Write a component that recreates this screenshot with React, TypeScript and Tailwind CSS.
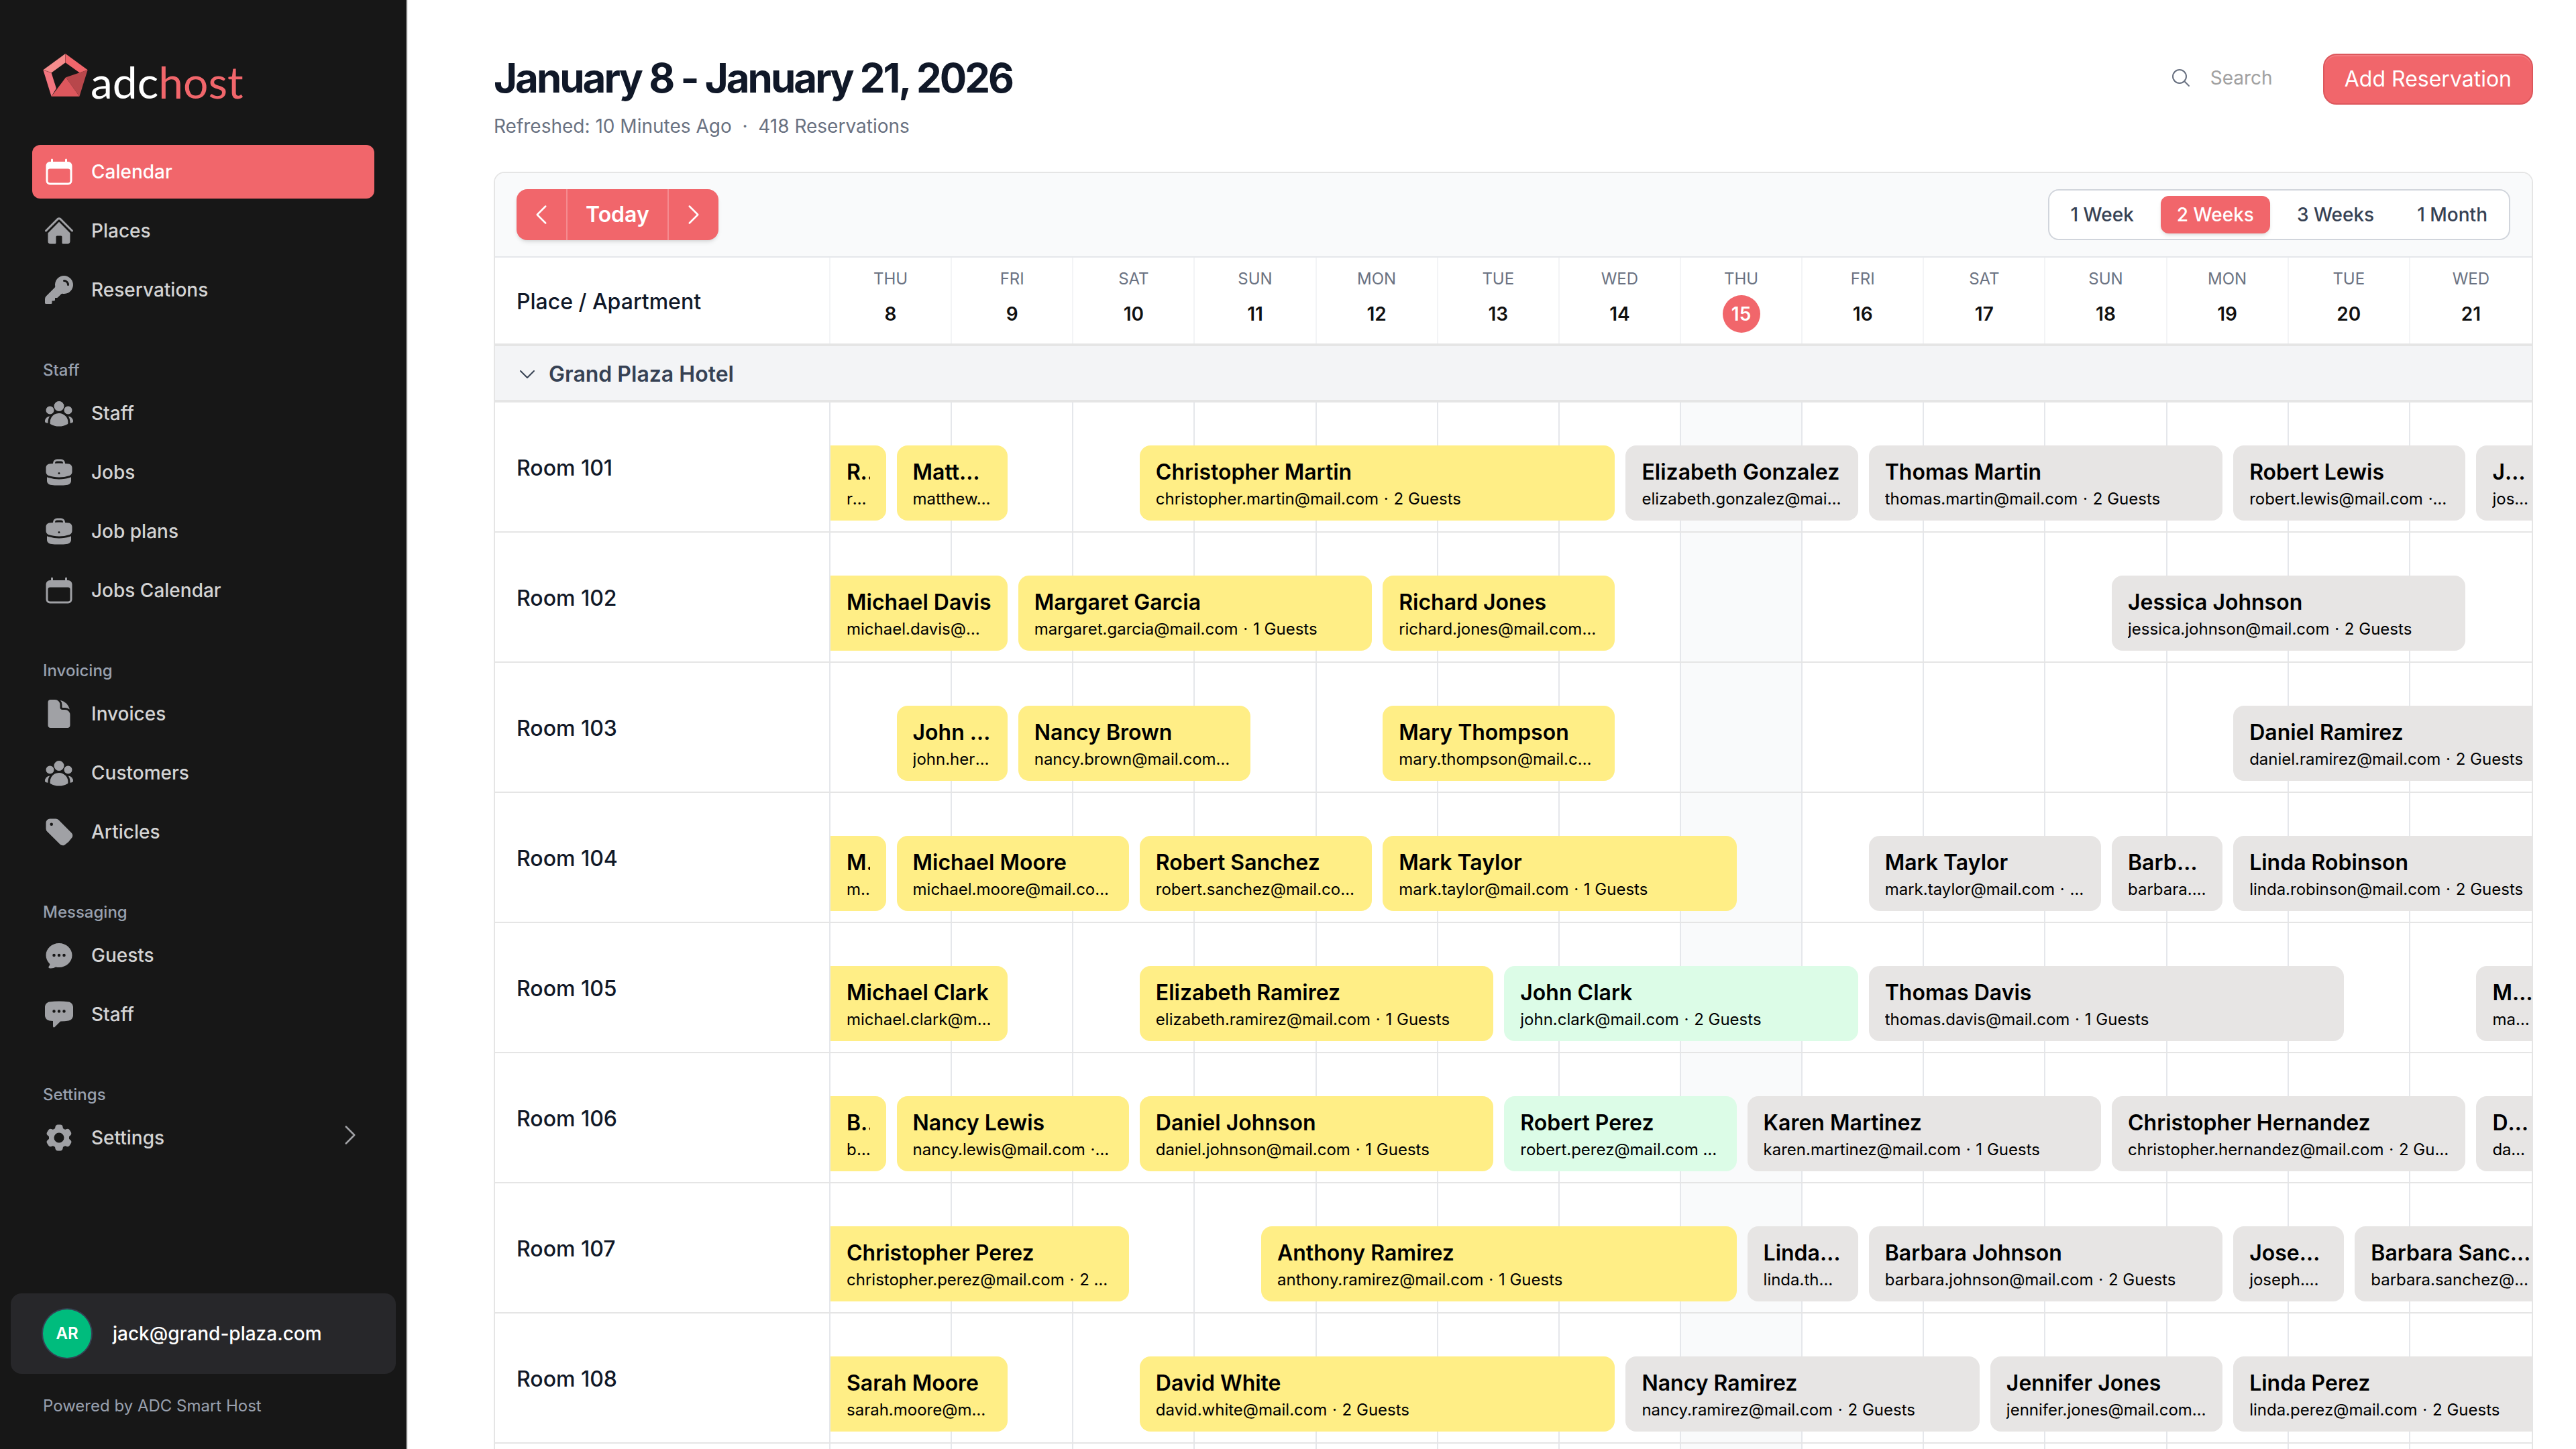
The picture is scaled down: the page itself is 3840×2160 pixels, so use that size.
import type { ReactNode } from "react";
import type { IconType } from "react-icons";
import {
  HiBriefcase,
  HiCalendar,
  HiChatBubbleLeftEllipsis,
  HiChatBubbleOvalLeftEllipsis,
  HiCog6Tooth,
  HiDocument,
  HiHome,
  HiKey,
  HiOutlineChevronDown,
  HiOutlineChevronLeft,
  HiOutlineChevronRight,
  HiOutlineMagnifyingGlass,
  HiTag,
  HiUserGroup,
} from "react-icons/hi2";

type NavEntry = { label: string; icon: IconType; active?: boolean; expandable?: boolean };
type NavGroup = { heading?: string; items: NavEntry[] };

const NAV: NavGroup[] = [
  {
    items: [
      { label: "Calendar", icon: HiCalendar, active: true },
      { label: "Places", icon: HiHome },
      { label: "Reservations", icon: HiKey },
    ],
  },
  {
    heading: "Staff",
    items: [
      { label: "Staff", icon: HiUserGroup },
      { label: "Jobs", icon: HiBriefcase },
      { label: "Job plans", icon: HiBriefcase },
      { label: "Jobs Calendar", icon: HiCalendar },
    ],
  },
  {
    heading: "Invoicing",
    items: [
      { label: "Invoices", icon: HiDocument },
      { label: "Customers", icon: HiUserGroup },
      { label: "Articles", icon: HiTag },
    ],
  },
  {
    heading: "Messaging",
    items: [
      { label: "Guests", icon: HiChatBubbleOvalLeftEllipsis },
      { label: "Staff", icon: HiChatBubbleLeftEllipsis },
    ],
  },
  {
    heading: "Settings",
    items: [{ label: "Settings", icon: HiCog6Tooth, expandable: true }],
  },
];

const WEEKDAYS = ["THU", "FRI", "SAT", "SUN", "MON", "TUE", "WED"];
const DAYS = Array.from({ length: 14 }, (_, i) => ({
  weekday: WEEKDAYS[i % 7],
  date: 8 + i,
  today: 8 + i === 15,
}));

type Tone = "past" | "current" | "upcoming";

// from / to are counted in half days from the start of the visible range.
type Booking = { name: string; guests: number; from: number; to: number; tone: Tone };

const TONES: Record<Tone, string> = {
  past: "bg-[#ffee86]",
  current: "bg-[#dcfce7]",
  upcoming: "bg-[#e7e5e4]",
};

const b = (name: string, guests: number, from: number, to: number, tone: Tone): Booking => ({
  name,
  guests,
  from,
  to,
  tone,
});

const ROOMS: { name: string; bookings: Booking[] }[] = [
  {
    name: "Room 101",
    bookings: [
      b("Robert Miller", 2, 0, 1, "past"),
      b("Matthew Lewis", 2, 1, 3, "past"),
      b("Christopher Martin", 2, 5, 13, "past"),
      b("Elizabeth Gonzalez", 2, 13, 17, "upcoming"),
      b("Thomas Martin", 2, 17, 23, "upcoming"),
      b("Robert Lewis", 2, 23, 27, "upcoming"),
      b("Joseph Clark", 2, 27, 28, "upcoming"),
    ],
  },
  {
    name: "Room 102",
    bookings: [
      b("Michael Davis", 2, 0, 3, "past"),
      b("Margaret Garcia", 1, 3, 9, "past"),
      b("Richard Jones", 2, 9, 13, "past"),
      b("Jessica Johnson", 2, 21, 27, "upcoming"),
    ],
  },
  {
    name: "Room 103",
    bookings: [
      b("John Hernandez", 2, 1, 3, "past"),
      b("Nancy Brown", 2, 3, 7, "past"),
      b("Mary Thompson", 2, 9, 13, "past"),
      b("Daniel Ramirez", 2, 23, 28, "upcoming"),
    ],
  },
  {
    name: "Room 104",
    bookings: [
      b("Mary Lopez", 2, 0, 1, "past"),
      b("Michael Moore", 2, 1, 5, "past"),
      b("Robert Sanchez", 2, 5, 9, "past"),
      b("Mark Taylor", 1, 9, 15, "past"),
      b("Mark Taylor", 2, 17, 21, "upcoming"),
      b("Barbara White", 2, 21, 23, "upcoming"),
      b("Linda Robinson", 2, 23, 28, "upcoming"),
    ],
  },
  {
    name: "Room 105",
    bookings: [
      b("Michael Clark", 2, 0, 3, "past"),
      b("Elizabeth Ramirez", 1, 5, 11, "past"),
      b("John Clark", 2, 11, 17, "current"),
      b("Thomas Davis", 1, 17, 25, "upcoming"),
      b("Mark Harris", 2, 27, 28, "upcoming"),
    ],
  },
  {
    name: "Room 106",
    bookings: [
      b("Barbara Lee", 2, 0, 1, "past"),
      b("Nancy Lewis", 2, 1, 5, "past"),
      b("Daniel Johnson", 1, 5, 11, "past"),
      b("Robert Perez", 2, 11, 15, "current"),
      b("Karen Martinez", 1, 15, 21, "upcoming"),
      b("Christopher Hernandez", 2, 21, 27, "upcoming"),
      b("David Garcia", 2, 27, 28, "upcoming"),
    ],
  },
  {
    name: "Room 107",
    bookings: [
      b("Christopher Perez", 2, 0, 5, "past"),
      b("Anthony Ramirez", 1, 7, 15, "past"),
      b("Linda Thompson", 2, 15, 17, "upcoming"),
      b("Barbara Johnson", 2, 17, 23, "upcoming"),
      b("Joseph Garcia", 2, 23, 25, "upcoming"),
      b("Barbara Sanchez", 2, 25, 28, "upcoming"),
    ],
  },
  {
    name: "Room 108",
    bookings: [
      b("Sarah Moore", 2, 0, 3, "past"),
      b("David White", 2, 5, 13, "past"),
      b("Nancy Ramirez", 2, 13, 19, "upcoming"),
      b("Jennifer Jones", 2, 19, 23, "upcoming"),
      b("Linda Perez", 2, 23, 28, "upcoming"),
    ],
  },
];

const RANGES = ["1 Week", "2 Weeks", "3 Weeks", "1 Month"];

function Logo() {
  return (
    <a href="#" aria-label="adchost" className="flex h-16 items-end gap-1 px-4">
      <svg viewBox="72 60 202 193" className="h-16 w-[67px] shrink-0" aria-hidden="true">
        <polygon points="173,60 173,100 110,146 73,133" fill="#f58c8c" />
        <polygon points="173,60 273,133 237,146 173,100" fill="#f1666b" />
        <polygon points="73,133 110,146 132,216 110,252" fill="#f3757f" />
        <polygon points="273,133 236,252 175,166" fill="#b8474b" />
        <polygon points="175,166 236,252 110,252" fill="#dd575d" />
        <polyline points="173,60 173,100" stroke="#8f3a3d" strokeWidth="1.5" fill="none" />
        <polyline points="73,133 110,146" stroke="#8f3a3d" strokeWidth="1.5" fill="none" />
      </svg>
      <span className="font-['Lato',sans-serif] text-[66px] leading-[44px] text-white">
        adc<span className="text-[#f1666b]">host</span>
      </span>
    </a>
  );
}

function NavItem({ item }: { item: NavEntry }) {
  const Icon = item.icon;
  return (
    <a
      href="#"
      aria-current={item.active ? "page" : undefined}
      className={
        item.active
          ? "flex h-20 items-center gap-6 rounded-xl bg-[#f1666b] px-4 text-[28px] font-medium text-white"
          : "flex h-20 items-center gap-6 rounded-xl px-4 text-[28px] font-medium text-[#d4d4d4]"
      }
    >
      <Icon className={item.active ? "size-12 shrink-0 text-white" : "size-12 shrink-0 text-[#a0a1a5]"} />
      <span>{item.label}</span>
      {item.expandable && (
        <HiOutlineChevronRight className="mt-4 ml-auto size-10 shrink-0 self-start text-[#a0a1a5]" />
      )}
    </a>
  );
}

function Sidebar() {
  return (
    <aside className="flex w-[608px] shrink-0 flex-col border-r-2 border-[#e5e5e5] bg-[#171717]">
      <div className="px-12 pt-20">
        <Logo />
      </div>
      <nav className="mt-[72px] flex flex-col gap-16 px-12">
        {NAV.map((group, i) => (
          <div key={i} className="flex flex-col gap-2">
            {group.heading && (
              <h2 className="px-4 text-[24px] leading-8 font-medium text-[#99a1af]">{group.heading}</h2>
            )}
            {group.items.map((item) => (
              <NavItem key={item.label} item={item} />
            ))}
          </div>
        ))}
      </nav>
      <div className="mt-auto px-4 pb-12">
        <button type="button" className="flex h-[120px] w-full items-center gap-8 rounded-2xl bg-[#27272a] px-12 text-left">
          <span className="flex size-[72px] items-center justify-center rounded-full bg-[#00bc7d] text-[24px] font-semibold text-white ring-2 ring-[#364153]">
            AR
          </span>
          <span className="text-[28px] font-medium text-white">jack@grand-plaza.com</span>
        </button>
        <p className="mt-8 px-12 text-[24px] leading-8 text-[#99a1af]">Powered by ADC Smart Host</p>
      </div>
    </aside>
  );
}

function PageHeader() {
  return (
    <header className="flex items-start justify-between">
      <div>
        <h1 className="text-[60px] leading-[72px] font-bold tracking-tighter text-[#101828]">
          January 8 - January 21, 2026
        </h1>
        <p className="mt-4 text-[28px] leading-10 whitespace-pre text-[#6a7282]">
          Refreshed: 10 Minutes Ago{"  ·  "}418 Reservations
        </p>
      </div>
      <div className="flex items-start gap-6">
        <label className="flex h-[72px] items-center gap-7">
          <HiOutlineMagnifyingGlass className="size-8 text-[#6a7282]" />
          <input
            type="search"
            aria-label="Search"
            placeholder="Search"
            className="w-36 bg-transparent text-[28px] leading-10 outline-none placeholder:text-[#a1a1a1]"
          />
        </label>
        <button
          type="button"
          className="h-[76px] rounded-[20px] border-2 border-[#dc575c] bg-[#f1666b] px-[30px] text-[32px] text-white shadow-[inset_0_2px_0_rgba(255,255,255,0.15)]"
        >
          Add Reservation
        </button>
      </div>
    </header>
  );
}

function Toolbar() {
  return (
    <div className="flex items-center justify-between border-b-2 border-[#e5e7eb] bg-[#f9fafb] px-8 py-6">
      <div className="flex h-[76px] items-stretch rounded-2xl bg-[#f1666b] text-white shadow-md">
        <button type="button" aria-label="Previous period" className="flex w-[74px] items-center justify-center">
          <HiOutlineChevronLeft className="size-10" />
        </button>
        <button type="button" className="border-x-2 border-[#f58c90] px-[27px] text-[32px] font-semibold">
          Today
        </button>
        <button type="button" aria-label="Next period" className="flex w-[74px] items-center justify-center">
          <HiOutlineChevronRight className="size-10" />
        </button>
      </div>
      <div className="flex h-[76px] items-center gap-4 rounded-2xl border-2 border-[#d1d5dc] bg-white px-2">
        {RANGES.map((range) => (
          <button
            key={range}
            type="button"
            aria-pressed={range === "2 Weeks"}
            className={
              range === "2 Weeks"
                ? "h-14 rounded-xl bg-[#f1666b] px-6 text-[28px] font-medium text-white shadow-md"
                : "h-14 rounded-xl px-6 text-[28px] font-medium text-[#364153]"
            }
          >
            {range}
          </button>
        ))}
      </div>
    </div>
  );
}

function BookingBar({ booking }: { booking: Booking }) {
  const openStart = booking.from === 0;
  const openEnd = booking.to === 28;
  const email = booking.name.toLowerCase().replace(" ", ".") + "@mail.com";
  const edges = openStart
    ? "mr-2 rounded-r-2xl px-6"
    : openEnd
      ? "ml-2 -mr-0.5 rounded-l-2xl pl-6"
      : "mx-2 rounded-2xl px-6";
  return (
    <a
      href="#"
      className={`row-start-1 mb-4 flex h-28 min-w-0 flex-col justify-center self-end pt-2 text-black ${edges} ${TONES[booking.tone]}`}
      style={{ gridColumn: `${booking.from + 1} / ${booking.to + 1}` }}
    >
      <span className="truncate text-[32px] leading-10 font-semibold">{booking.name}</span>
      <span className="truncate text-[24px] leading-10">
        {email} <span className="mx-px">·</span> {booking.guests} Guests
      </span>
    </a>
  );
}

function DayCells() {
  return (
    <>
      {DAYS.map((day, i) => (
        <span
          key={day.date}
          className={`row-start-1 border-r-2 border-[#e5e7eb] last-of-type:border-r-0 ${day.today ? "bg-[#f9fafb]" : ""}`}
          style={{ gridColumn: `${i * 2 + 1} / span 2` }}
        />
      ))}
    </>
  );
}

function TimelineRow({ label, children }: { label: string; children?: ReactNode }) {
  return (
    <tr className="grid h-[194px] grid-cols-[500px_minmax(0,1fr)] border-b-2 border-[#e5e5e5]">
      <th
        scope="row"
        className="flex items-center border-r-2 border-[#e5e7eb] px-8 pt-1 text-left text-[32px] font-medium text-[#101828]"
      >
        {label}
      </th>
      <td className="grid grid-cols-28 grid-rows-1">
        <DayCells />
        {children}
      </td>
    </tr>
  );
}

function Timeline() {
  return (
    <table className="block w-full">
      <thead className="block">
        <tr className="grid h-[132px] grid-cols-[500px_repeat(14,minmax(0,1fr))] border-b-4 border-[#e5e5e5]">
          <th
            scope="col"
            className="flex items-center border-r-2 border-[#f3f4f6] px-8 pt-1 text-left text-[32px] font-medium text-[#101828]"
          >
            Place / Apartment
          </th>
          {DAYS.map((day) => (
            <th
              key={day.date}
              scope="col"
              className="flex flex-col items-center gap-2 border-r-2 border-[#f3f4f6] pt-4 last:border-r-0"
            >
              <span className="text-[24px] leading-8 font-normal text-[#6a7282]">{day.weekday}</span>
              <span
                className={
                  day.today
                    ? "flex size-14 items-center justify-center rounded-full bg-[#f1666b] text-[28px] font-semibold text-white"
                    : "flex size-14 items-center justify-center text-[28px] font-semibold text-[#101010]"
                }
              >
                {day.date}
              </span>
            </th>
          ))}
        </tr>
      </thead>
      <tbody className="block">
        <tr className="block border-b-4 border-[#e5e5e5] bg-[#f3f4f6]">
          <th scope="rowgroup" colSpan={15} className="block">
            <button
              type="button"
              aria-expanded="true"
              className="flex h-20 w-full items-center gap-4 px-8 pt-1 text-[32px] font-semibold text-[#364153]"
            >
              <HiOutlineChevronDown className="size-8" />
              Grand Plaza Hotel
            </button>
          </th>
        </tr>
        {ROOMS.map((room) => (
          <TimelineRow key={room.name} label={room.name}>
            {room.bookings.map((booking) => (
              <BookingBar key={booking.from} booking={booking} />
            ))}
          </TimelineRow>
        ))}
        <TimelineRow label="" />
      </tbody>
    </table>
  );
}

export default function App() {
  return (
    <div className="flex h-screen overflow-hidden bg-white font-['Inter',sans-serif]">
      <Sidebar />
      <main className="min-w-0 flex-1 overflow-hidden pt-20 pr-16 pl-32">
        <PageHeader />
        <section className="mt-12 overflow-hidden rounded-t-2xl border-2 border-[#e5e5e5]">
          <Toolbar />
          <Timeline />
        </section>
      </main>
    </div>
  );
}
